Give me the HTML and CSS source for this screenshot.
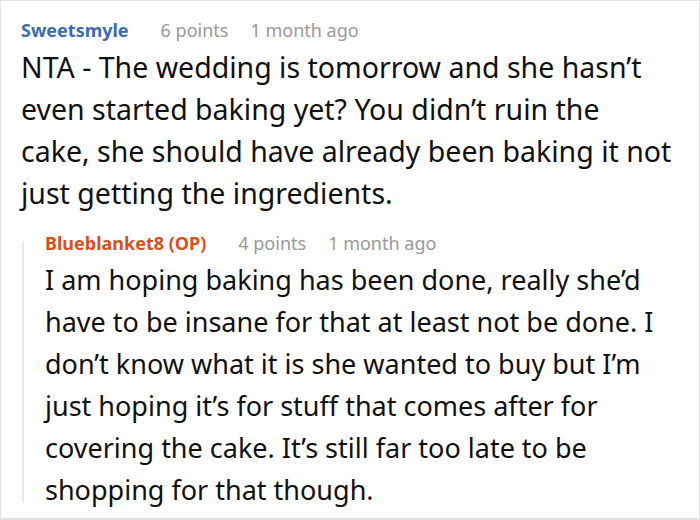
FILE: index.html
```html
<!DOCTYPE html>
<html>
<head>
<meta charset="utf-8">
<link rel="stylesheet" href="styles.css">
</head>
<body>
<div class="frame">
  <div class="comment">
    <div class="meta">
      <span class="author">Sweetsmyle</span>
      <span class="info">6 points</span>
      <span class="info">1 month ago</span>
    </div>
    <p class="text text-main">NTA - The wedding is tomorrow and she hasn’t even started baking yet? You didn’t ruin the<br>cake, she should have already been baking it not just getting the ingredients.</p>
    <div class="reply">
      <div class="meta">
        <span class="author op">Blueblanket8 (OP)</span>
        <span class="info">4 points</span>
        <span class="info">1 month ago</span>
      </div>
      <p class="text">I am hoping baking has been done, really she’d have to be insane for that at least not be done. I don’t know what it is she wanted to buy but I’m just hoping it’s for stuff that comes after for covering the cake. It’s still far too late to be shopping for that though.</p>
    </div>
  </div>
</div>
</body>
</html>
```
FILE: styles.css
```css
html, body {
  margin: 0;
  padding: 0;
  background: #fff;
}
.frame {
  width: 700px;
  height: 520px;
  box-sizing: border-box;
  border: 1px solid #e3e3e3;
  border-bottom-width: 2px;
  overflow: hidden;
  font-family: "Noto Sans", sans-serif;
  color: #111;
}
.comment {
  padding: 17px 15px 0 20px;
}
.meta {
  display: flex;
  gap: 22px;
  font-size: 18px;
  line-height: 24px;
}
.author {
  font-weight: 700;
  color: #3a6cb4;
  margin-right: 10px;
}
.author.op {
  color: #d9501e;
}
.info {
  color: #999;
}
.text {
  margin: 4px 0 0 0;
  font-size: 27px;
  line-height: 42px;
}
.text-main {
  font-size: 28.5px;
}
.reply {
  position: relative;
  margin-top: 17px;
  padding-left: 24px;
}
.reply::before {
  content: "";
  position: absolute;
  left: 1px;
  top: 10px;
  bottom: 8px;
  width: 2px;
  background: #e8e8e8;
}
```
